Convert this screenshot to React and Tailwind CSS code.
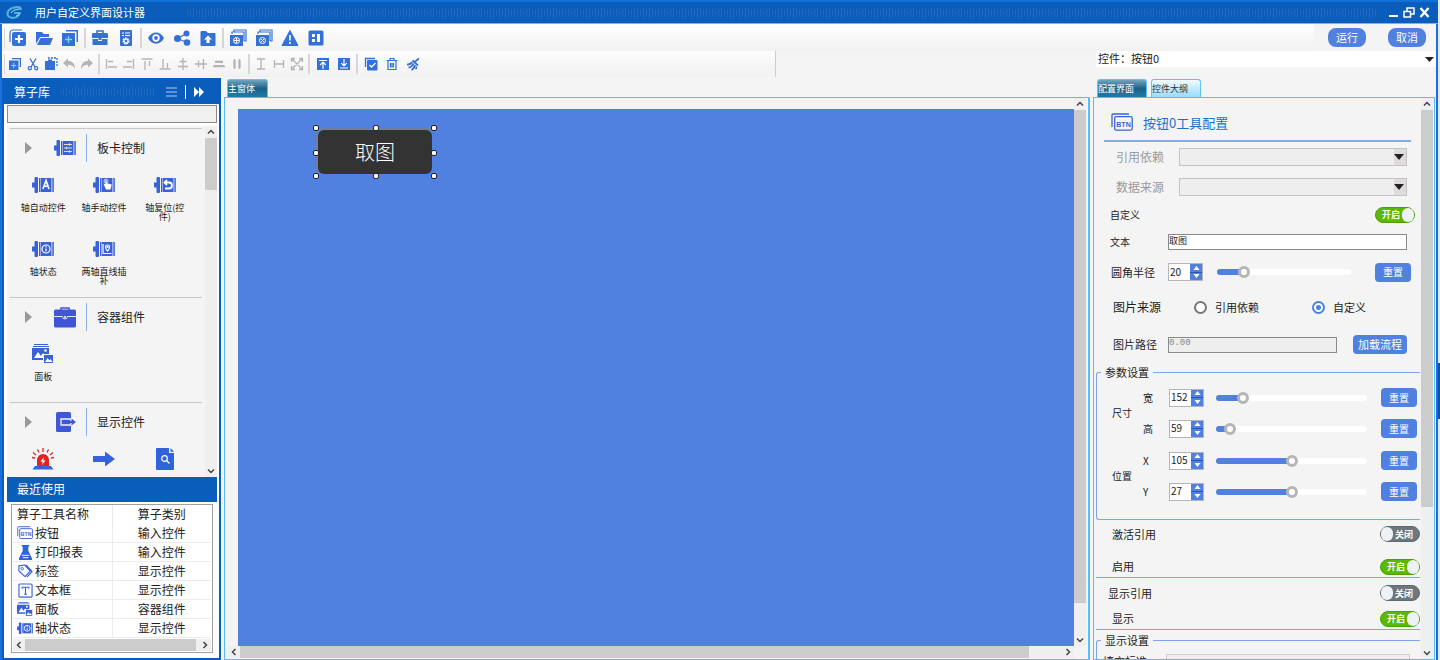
import { useState } from "react";

const B = "#3570d6";
const G = "#b4b4b4";

function Svg({ size = 18, box = 18, color = B, children }) {
  return (
    <svg width={size} height={size} viewBox={`0 0 ${box} ${box}`} fill={color} stroke="none" className="shrink-0" aria-hidden="true">
      {children}
    </svg>
  );
}

// barra superior
const topTools = [
  [
    { name: "新建", icon: <><path d="M1 13V4a3 3 0 0 1 3-3h9" fill="none" stroke={B} strokeWidth="1.2" /><rect x="3" y="3" width="14" height="14" rx="2" /><path d="M10 6v8M6 10h8" stroke="#fff" strokeWidth="2.2" /></> },
    { name: "打开", icon: <><path d="M1 3h6l1.500 2H14v3H5L1 15z" /><path d="M5.500 9H18l-3 7H2z" /></> },
    { name: "添加窗口", icon: <><path d="M5 1h12v12h-1.500V2.500H5z" /><rect x="1" y="4" width="13" height="13" /><path d="M7.500 7v7M4 10.500h7" stroke="#8fd0ee" strokeWidth="1.300" /></> },
  ],
  [
    { name: "工具箱", icon: <><path d="M6 4V2h6v2" fill="none" stroke={B} strokeWidth="1.600" /><path d="M2 4h14a1 1 0 0 1 1 1v4H1V5a1 1 0 0 1 1-1zM1.500 10H7v2h4v-2h5.500v6h-15z" /><path d="M1 9.500h16" stroke="#fff" strokeWidth=".8" /><rect x="7.500" y="8.500" width="3" height="2.500" /></> },
    { name: "文档设置", icon: <><rect x="3" y="1" width="12" height="16" rx="1" /><path d="M5 4h2M8 4h5M5 6.500h2M8 6.500h5" stroke="#fff" strokeWidth="1" /><circle cx="9" cy="12" r="2.600" fill="none" stroke="#fff" strokeWidth="1.800" strokeDasharray="1.600 .6" /><circle cx="9" cy="12" r="1.900" fill="none" stroke="#fff" strokeWidth="1" /></> },
  ],
  [
    { name: "预览", icon: <><path d="M1 9c3.500-7.500 12.500-7.500 16 0-3.500 7.500-12.500 7.500-16 0z" /><circle cx="9" cy="9" r="3.700" fill="#fff" /><circle cx="9" cy="9" r="1.900" /></> },
    { name: "分享", icon: <><circle cx="4.500" cy="9.500" r="3.500" /><circle cx="13.500" cy="4.500" r="3" /><circle cx="14" cy="13.500" r="3.300" /><path d="M4.500 9.500l9-5M4.500 9.500l9.500 4" stroke={B} strokeWidth="1.200" /></> },
    { name: "导出", icon: <><path d="M2 2h5l2 2h6.500a1 1 0 0 1 1 1v11a1 1 0 0 1-1 1h-13a1 1 0 0 1-1-1V3z" /><path d="M9 6.500l4 4h-2.500V14h-3v-3.500H5z" fill="#fff" /></> },
  ],
  [
    { name: "新增模板", icon: <><path d="M5 3V1h12v11h-2M3 5V3h12v9" fill="none" stroke={B} strokeWidth="1.200" /><path d="M1 6h13v11H1z" /><circle cx="7.500" cy="11.500" r="3" fill="none" stroke="#fff" /><path d="M7.500 9v5M5 11.500h5" stroke="#fff" /></> },
    { name: "删除模板", icon: <><path d="M5 3V1h12v11h-2M3 5V3h12v9" fill="none" stroke={B} strokeWidth="1.200" /><path d="M1 6h13v11H1z" /><circle cx="7.500" cy="11.500" r="3" fill="none" stroke="#fff" /><path d="M5.800 9.800l3.400 3.400M9.200 9.800l-3.400 3.400" stroke="#fff" /></> },
    { name: "警告", icon: <><path d="M9 1.500L17 16.500H1z" stroke={B} strokeLinejoin="round" /><path d="M9 6v5.500M9 13v2" stroke="#fff" strokeWidth="1.600" /></> },
    { name: "布局", icon: <><rect x="1.500" y="1.500" width="15" height="15" rx="1.500" /><path d="M5 5h3v3H5zM5 10h3v3H5zM10 5h3v8h-3z" fill="#fff" /></> },
  ],
];

const ln = (d) => <path d={d} fill="none" stroke={G} strokeWidth="1.300" />;
const editTools = [
  [
    { name: "复制", icon: <><path d="M4 1h9v9h-1.300V2.300H4z" /><rect x="1" y="3.500" width="9.500" height="9.500" /><path d="M5.700 6v5M3.200 8.500h5" stroke="#8fd0ee" /></> },
    { name: "剪切", icon: <path d="M4 1.500l5 8.500M10 1.500L5 10" fill="none" stroke={B} strokeWidth="1.300" />, extra: true },
    { name: "粘贴", icon: <><path d="M4 1h9v9" fill="none" stroke={B} strokeDasharray="2 1" strokeWidth="1.300" /><path d="M1 4h10v9H1zM4 2.500h4V4H4z" /></> },
    { name: "撤销", icon: <path d="M1 6l5-4.500V4c4 0 7 2.500 7 8-1.500-3-3.500-4.200-7-4.200v2.700z" fill={G} /> },
    { name: "重做", icon: <path d="M13 6L8 1.500V4c-4 0-7 2.500-7 8 1.500-3 3.500-4.200 7-4.200v2.700z" fill={G} /> },
  ],
  [
    { name: "左对齐", icon: <>{ln("M2.500 2v10M4 4.500h5M4 10h9")}</> },
    { name: "右对齐", icon: <>{ln("M11.500 2v10M5 4.500h5M1 10h9")}</> },
    { name: "顶对齐", icon: <>{ln("M1.500 2h11M5 4v9M9.500 4v5")}</> },
    { name: "底对齐", icon: <>{ln("M1.500 12h11M5 2v9M9.500 6v5")}</> },
    { name: "水平居中", icon: <>{ln("M7 1v12M3.500 4.500h7M2 9.500h10")}</> },
    { name: "垂直居中", icon: <>{ln("M1 7h12M4.500 3.500v7M9.500 2v10")}</> },
    { name: "等宽", icon: <>{ln("M3 4.500h8M1 9.500h12M3 5.300h8M2 8.700h10")}</> },
    { name: "等高", icon: <>{ln("M4.500 2v10M9.500 2v10M4 4h1v6H4zM9 4h1v6H9z")}</> },
  ],
  [
    { name: "垂直间距", icon: <>{ln("M3 2h8M7 2v10M3 12h8")}</> },
    { name: "水平间距", icon: <>{ln("M2.500 3v8M2.500 7h9M11.500 3v8")}</> },
    { name: "缩放", icon: <>{ln("M2 2l10 10M12 2L2 12M1.500 5V1.500H5M9 1.500h3.500V5M12.500 9v3.500H9M5 12.500H1.500V9")}</> },
  ],
];
const layerTools = [
  [
    { name: "置顶", icon: <><rect x="1" y="1" width="12" height="12" /><path d="M3 3.500h8M7 12V5.500M4.200 8L7 5.200 9.800 8" fill="none" stroke="#fff" strokeWidth="1.200" /></> },
    { name: "置底", icon: <><rect x="1" y="1" width="12" height="12" /><path d="M3 11h8M7 2v7M4.200 6.200L7 9l2.800-2.800" fill="none" stroke="#fff" strokeWidth="1.200" /></> },
  ],
  [
    { name: "全选", icon: <><path d="M1.500 10V1.500H11" fill="none" stroke={B} strokeWidth="1.300" /><rect x="3" y="3" width="10.500" height="10.500" rx="1" /><path d="M5.500 8l2 2 4-4" fill="none" stroke="#fff" strokeWidth="1.300" /></> },
    { name: "删除", icon: <path d="M1.500 3.500h11M5 3V1.500h4V3M3 4v8.500h8V4M5.500 6v4.500M8.500 6v4.500M7 6v4.500" fill="none" stroke={B} strokeWidth="1.200" /> },
    { name: "清空", icon: <path d="M13 1.500L8.500 5M6.500 3.500l5.500 5M6 5C5 7 3 7.500 1 7.700M7.500 6.500C6.500 9 5 10 2.500 10.700M9 8c-.5 2.500-1.500 4-3.500 5M10.500 9.500L10 12" fill="none" stroke={B} strokeWidth="1.800" /> },
  ],
];

function ToolGroup({ items, wide }) {
  return (
    <div className="flex items-center">
      {items.map((t) => (
        <button key={t.name} type="button" aria-label={t.name} className={wide ? "flex w-[21px] justify-center" : "flex w-[18px] justify-center"}>
          <Svg size={14} box={14}>
            {t.icon}
            {t.extra && (
              <g fill="none" stroke={B} strokeWidth="1.200">
                <circle cx="3.800" cy="11.300" r="1.600" />
                <circle cx="10.200" cy="11.300" r="1.600" />
              </g>
            )}
          </Svg>
        </button>
      ))}
    </div>
  );
}

const Sep = () => <span className="mx-0.5 h-5 w-0.5 bg-[#d6d6d6]" />;

// onda decorativa de las cabeceras
function Wave({ id }) {
  const hs = [4, 6, 10, 5, 8, 12, 9, 6, 11, 7, 12, 10, 6, 9, 5, 8];
  return (
    <svg className="h-4 w-full" aria-hidden="true">
      <defs>
        <pattern id={id} width="48" height="16" patternUnits="userSpaceOnUse">
          {hs.map((h, i) => (
            <rect key={i} x={i * 3} y={8 - h / 2} width="1" height={h} fill="#1f69bf" />
          ))}
        </pattern>
      </defs>
      <rect width="100%" height="16" fill={`url(#${id})`} />
    </svg>
  );
}

const chevrons = {
  up: "M1 5.500L4 2.500l3 3",
  down: "M1 2.500l3 3 3-3",
  left: "M5.500 1l-3 3 3 3",
  right: "M2.500 1l3 3-3 3",
};

function Arrow({ dir }) {
  return (
    <button type="button" aria-label={dir} className="flex size-3 shrink-0 items-center justify-center">
      <svg width="8" height="8" viewBox="0 0 8 8" fill="none" stroke="#444" strokeWidth="1.500">
        <path d={chevrons[dir]} />
      </svg>
    </button>
  );
}

function VScroll({ size }) {
  return (
    <div className="flex w-3 shrink-0 flex-col bg-[#efefef]">
      <Arrow dir="up" />
      <div className="flex-1">
        <div className="bg-[#cccccc]" style={{ height: size }} />
      </div>
      <Arrow dir="down" />
    </div>
  );
}

function HScroll({ size }) {
  return (
    <div className="flex h-3 min-w-0 flex-1 bg-[#efefef]">
      <Arrow dir="left" />
      <div className="flex-1">
        <div className="h-full bg-[#cccccc]" style={{ width: size }} />
      </div>
      <Arrow dir="right" />
    </div>
  );
}

// iconos de la biblioteca
function AxisIcon({ children, size = 22 }) {
  return (
    <svg width={size} height={(size * 20) / 22} viewBox="0 0 22 20" fill="#3a62d8" aria-hidden="true" className="shrink-0">
      <rect x="0" y="7.500" width="3" height="5" />
      <rect x="2.500" y="2" width="3.500" height="16" rx="1" />
      <rect x="7" y="3" width="1" height="14" />
      <rect x="8.500" y="3" width="11" height="14" />
      <rect x="20.300" y="3" width="1.500" height="14" />
      <g stroke="#fff" fill="none" strokeWidth="1.200" transform="translate(1 0)">{children}</g>
    </svg>
  );
}

function PanelIcon({ size = 22 }) {
  return (
    <svg width={size} height={(size * 20) / 22} viewBox="0 0 22 20" fill="#3a62d8" aria-hidden="true" className="shrink-0">
      <path d="M2 0h14v1H2zM1 2h16v1H1zM0 4h17v12H0z" />
      <path d="M2 14l4-6 3 4 2-3 3 5z" fill="#fff" />
      <circle cx="13.500" cy="6.500" r="1.300" fill="#fff" />
      <rect x="11.500" y="10.500" width="10" height="9" stroke="#f4f4f4" />
      <path d="M13 18l2.500-4 2 2.500 1-1.500 2 3z" fill="#fff" />
    </svg>
  );
}

function BtnIcon({ size = 22 }) {
  return (
    <svg width={size} height={(size * 18) / 22} viewBox="0 0 22 18" fill="none" stroke="#3a62d8" aria-hidden="true" className="shrink-0">
      <path d="M1 14V2a1 1 0 0 1 1-1h16" strokeWidth="1.300" />
      <rect x="3.700" y="3.700" width="17.500" height="13.500" rx="1.500" strokeWidth="1.300" />
      <text x="12.500" y="13.500" fontSize="7" fontWeight="700" fontFamily="Liberation Sans, sans-serif" textAnchor="middle" fill="#3a62d8" stroke="none">BTN</text>
    </svg>
  );
}

const InfoGlyph = <><circle cx="13" cy="10" r="4" /><path d="M13 9.500v3M13 7.300v1.200" /></>;

const library = [
  {
    title: "板卡控制",
    icon: <AxisIcon><path d="M9 6.500h8M9 10h8M9 13.500h8M14.500 5.300v2.400M11.500 8.800v2.400M14.500 12.300v2.400" stroke="#e8dcc0" /></AxisIcon>,
    items: [
      { label: "轴自动控件", icon: <AxisIcon><path d="M10 14l3-8.500 3 8.500M11 11.300h4" strokeWidth="1.600" /></AxisIcon> },
      { label: "轴手动控件", icon: <AxisIcon><path d="M12 5v5l-1.500-.5 2 4.500h3.500l1-4-5-1.500V5z" fill="#fff" /><circle cx="12" cy="6" r="2" strokeWidth=".7" /></AxisIcon> },
      { label: "轴复位(控件)", icon: <AxisIcon><path d="M12 5L9.500 7.500 12 10M10 7.500h4a3 3 0 0 1 0 6h-4" strokeWidth="1.800" /></AxisIcon> },
      { label: "轴状态", icon: <AxisIcon>{InfoGlyph}</AxisIcon> },
      { label: "两轴直线插补", icon: <AxisIcon><path d="M9 5v9.500h8.500" /><path d="M13.500 12c-3-3-2.500-6 0-6s3 3 0 6z" /><circle cx="13.500" cy="8" r=".5" /></AxisIcon> },
    ],
  },
  {
    title: "容器组件",
    icon: (
      <svg width="22" height="22" viewBox="0 0 22 22" fill="#3f56d6" aria-hidden="true">
        <path d="M7 4V2h8v2" fill="none" stroke="#3f56d6" strokeWidth="1.500" />
        <rect x="0" y="3.500" width="22" height="18" rx="1.500" />
        <path d="M0 10.500h8.500a2.500 2.500 0 0 0 5 0H22" fill="none" stroke="#e8e8e8" />
        <circle cx="11" cy="11" r="1" fill="#fff" />
      </svg>
    ),
    items: [{ label: "面板", icon: <PanelIcon /> }],
  },
  {
    title: "显示控件",
    icon: (
      <svg width="22" height="22" viewBox="0 0 22 22" fill="#3f56d6" aria-hidden="true">
        <rect x="2" y="1" width="15" height="20" rx="1.500" />
        <path d="M7 8h10v6H7z" fill="none" stroke="#f4f4f4" strokeWidth="1.300" />
        <path d="M17 8h2v6h-2z" fill="#f4f4f4" />
        <path d="M9 10h8.500V7.500L22 11l-4.500 3.500V12H9z" />
      </svg>
    ),
    items: [
      {
        label: "",
        icon: (
          <svg width="22" height="22" viewBox="0 0 22 22" fill="#e32222" aria-label="报警灯">
            <path d="M5 18v-6a6 6 0 0 1 12 0v6z" />
            <path d="M11 0v4M5.500 1.500l1.500 3M16.500 1.500l-1.500 3M1 4.500l3 2.500M21 4.500L18 7M0 9.500l3 .5M22 9.500l-3 .5" stroke="#e32222" strokeWidth="1.300" />
            <path d="M12 9l-3.500 4.500h2.200L10 17l3.500-4.500h-2.200z" fill="#fff" />
            <path d="M3 18h16l2.500 3.500H.5z" fill="#3a62d8" />
          </svg>
        ),
      },
      {
        label: "",
        icon: (
          <svg width="22" height="22" viewBox="0 0 22 22" fill="#3a62d8" aria-label="箭头">
            <path d="M0 8h12V3.500L22 11l-10 7.500V14H0z" />
          </svg>
        ),
      },
      {
        label: "",
        icon: (
          <svg width="22" height="22" viewBox="0 0 22 22" fill="#2f63dc" aria-label="查看文件">
            <path d="M3 0h12v5h5v16a1 1 0 0 1-1 1H3a1 1 0 0 1-1-1V1a1 1 0 0 1 1-1zM16.500 0L20 3.800h-3.500z" />
            <circle cx="10.500" cy="10.500" r="2.800" fill="none" stroke="#fff" strokeWidth="1.200" />
            <path d="M12.500 12.500l3 3" stroke="#fff" strokeWidth="1.300" />
          </svg>
        ),
      },
    ],
  },
];

const recent = [
  { name: "按钮", kind: "输入控件", icon: <BtnIcon size={16} /> },
  { name: "打印报表", kind: "输入控件", icon: <Svg size={15} box={16} color="#2f63dc"><path d="M4 0h8v1.500h-1V6l4 8.500V16H1v-1.500L5 6V1.500H4z" /><path d="M4 11h8M5 13.500h6" stroke="#fff" /></Svg> },
  { name: "标签", kind: "显示控件", icon: <Svg size={15} box={16} color="none"><path d="M1 2l6-1 6 6.500-5.500 6L1 7.500zM8.500 1L15 8l-5.500 6" stroke="#3a62d8" strokeLinejoin="round" strokeWidth="1.200" /><circle cx="4.500" cy="5" r="1.300" stroke="#3a62d8" /></Svg> },
  { name: "文本框", kind: "显示控件", icon: <Svg size={15} box={16} color="none"><rect x="1" y="1" width="14" height="14" rx="1" stroke="#3a62d8" strokeWidth="1.200" /><path d="M4.500 6V4.500h7V6M8 4.500v7.500M6.500 12h3" stroke="#3a62d8" strokeWidth="1.200" /></Svg> },
  { name: "面板", kind: "容器组件", icon: <PanelIcon size={16} /> },
  { name: "轴状态", kind: "显示控件", icon: <AxisIcon size={16}>{InfoGlyph}</AxisIcon> },
];

function Sidebar() {
  return (
    <aside className="flex w-[219px] shrink-0 flex-col border-2 border-[#0a5dbb] bg-white">
      <div className="flex h-6 shrink-0 items-center bg-[#0a5dbb] pl-2.5 text-[12px] text-white">
        <h2 className="shrink-0">算子库</h2>
        <div className="ml-2.5 w-24">
          <Wave id="waveLib" />
        </div>
        <button type="button" aria-label="列表" className="ml-2.5">
          <svg width="11" height="10" viewBox="0 0 11 10" stroke="#a9cbef" strokeWidth="1.200"><path d="M0 1h11M0 5h11M0 9h11" /></svg>
        </button>
        <span className="ml-2 h-3.5 w-px bg-white" />
        <button type="button" aria-label="展开" className="ml-2">
          <svg width="10" height="10" viewBox="0 0 10 10" fill="#fff"><path d="M0 0l5 5-5 5zM5 0l5 5-5 5z" /></svg>
        </button>
      </div>
      <div className="flex min-h-0 flex-1 flex-col pl-[3px] pr-0.5">
        <input aria-label="搜索算子" className="my-px h-[18px] w-full shrink-0 border border-[#8a8a8a] bg-[#f0f0f0] px-1 text-[11px]" />
        <div className="mt-0.5 flex min-h-0 flex-1 bg-[#f4f4f4]">
          <div className="mt-0.5 min-w-0 flex-1 overflow-hidden px-[3px]">
            {library.map((g) => (
              <section key={g.title} className="border-t border-[#c8c8c8]">
                <div className="flex h-[38px] items-center">
                  <button type="button" aria-label="展开分组" className="ml-[15px]">
                    <svg width="7" height="12" viewBox="0 0 7 12" fill="#999"><path d="M0 0l7 6-7 6z" /></svg>
                  </button>
                  <span className="ml-[22px] flex w-[22px] justify-center">{g.icon}</span>
                  <span className="ml-2.5 h-7 w-px bg-[#8fb0ee]" />
                  <h3 className="ml-2.5 text-[12px]">{g.title}</h3>
                </div>
                <div className="grid grid-cols-3 gap-y-[18px] pb-3 pl-[3px] pr-[7px] pt-2">
                  {g.items.map((it, i) => (
                    <div key={i} className="flex h-[46px] flex-col items-center gap-2">
                      <span className="flex h-5 shrink-0 items-center">{it.icon}</span>
                      <span className="w-12 text-center text-[9px] leading-[9px]">{it.label}</span>
                    </div>
                  ))}
                </div>
              </section>
            ))}
          </div>
          <VScroll size={52} />
        </div>
        <div className="shrink-0 pb-[5px]">
          <h2 className="flex h-[25px] items-center bg-[#0a5dbb] pl-2.5 text-[12px] text-white">最近使用</h2>
          <div className="mx-1 mt-0.5 border border-[#a0a0a0] px-px">
            <table className="w-full table-fixed text-left text-[12px]">
              <thead>
                <tr className="h-[19px]">
                  <th className="border-r border-[#e8e8e8] pl-1 font-normal">算子工具名称</th>
                  <th className="text-center font-normal">算子类别</th>
                </tr>
              </thead>
              <tbody>
                {recent.map((r) => (
                  <tr key={r.name} className="h-[19px] border-b border-[#ececec]">
                    <td className="border-r border-[#ececec] pl-1">
                      <span className="flex items-center gap-0.5">
                        <span className="flex w-4 justify-center">{r.icon}</span>
                        {r.name}
                      </span>
                    </td>
                    <td className="text-center">{r.kind}</td>
                  </tr>
                ))}
              </tbody>
            </table>
            <div className="flex py-px">
              <HScroll size="98%" />
            </div>
          </div>
        </div>
      </div>
    </aside>
  );
}

function Tab({ active, children }) {
  return (
    <button
      type="button"
      role="tab"
      aria-selected={!!active}
      className={
        active
          ? "h-[18px] rounded-t-[3px] border border-b-0 border-[#5cc4f5] bg-linear-to-b from-[#6fa6bd] via-[#1a6288] to-[#1f7ca6] pr-3 text-[9px] text-white"
          : "h-[18px] rounded-t-[3px] border border-b-0 border-[#5cc4f5] bg-linear-to-b from-[#f2fbff] via-[#c3ebfd] to-[#9adcfb] pr-3 text-[9px] text-[#333]"
      }
    >
      {children}
    </button>
  );
}

function Widget() {
  const dots = [
    "-left-1 -top-1", "left-1/2 -top-1 -ml-0.5", "-right-1 -top-1",
    "-left-1 top-1/2 -mt-0.5", "-right-1 top-1/2 -mt-0.5",
    "-left-1 -bottom-1", "left-1/2 -bottom-1 -ml-0.5", "-right-1 -bottom-1",
  ];
  return (
    <div className="absolute left-[78px] top-[19px] h-12 w-[118px] border border-[#6d7fa8] p-px">
      <button type="button" className="size-full rounded-md bg-[#333] text-[20px] font-light text-white">取图</button>
      {dots.map((d) => (
        <span key={d} className={`absolute size-[6px] rounded-[2px] border border-[#222] bg-white ${d}`} />
      ))}
    </div>
  );
}

function Workspace() {
  return (
    <main className="ml-[3px] flex min-w-0 flex-1 flex-col pt-px">
      <div role="tablist" className="flex pl-[3px]">
        <Tab active>主窗体</Tab>
      </div>
      <div className="flex min-h-0 flex-1 flex-col border border-r-2 border-[#55bdf8] pb-px pl-px pr-0.5">
        <div className="flex min-h-0 flex-1">
          <div className="relative ml-3 mt-[11px] min-w-0 flex-1 bg-[#5080e0]">
            <Widget />
          </div>
          <VScroll size="94%" />
        </div>
        <div className="flex pl-0.5 pr-3">
          <HScroll size="96%" />
        </div>
      </div>
    </main>
  );
}

function Select({ label, options = [], id }) {
  return (
    <div className="flex h-[30px] items-center pr-[13px] text-[#9a9a9a]">
      <label htmlFor={id} className="w-[83px] pl-5 text-[12px]">{label}</label>
      <div className="relative flex-1">
        <select id={id} disabled className="block h-[18px] w-full appearance-none border border-[#c4c4c4] bg-[#eee]">
          {options.map((o) => <option key={o}>{o}</option>)}
        </select>
        <span className="pointer-events-none absolute inset-y-px right-px flex w-3 items-center bg-[#e0dcdc]">
          <svg width="10" height="6" viewBox="0 0 10 6" fill="#222"><path d="M0 0h10L5 6z" /></svg>
        </span>
      </div>
    </div>
  );
}

function Toggle({ label, on }) {
  const [v, setV] = useState(on);
  return (
    <label className={v ? "relative flex h-4 w-10 items-center rounded-full border border-[#4aa005] bg-[#5cb800] pl-1.5 text-[9px] font-bold text-white" : "relative flex h-4 w-10 items-center justify-end rounded-full border border-[#5d6b72] bg-[#6b797f] pr-1.5 text-[9px] font-bold text-white"}>
      <input type="checkbox" role="switch" aria-label={label} checked={v} onChange={(e) => setV(e.target.checked)} className="absolute inset-0 opacity-0" />
      <span>{v ? "开启" : "关闭"}</span>
      <span className={v ? "absolute right-0 h-3.5 w-3 rounded-full bg-[#eef2f5]" : "absolute left-0 h-3.5 w-3 rounded-full bg-[#eef2f5]"} />
    </label>
  );
}

function Reset() {
  return <button type="button" className="h-[19px] w-9 rounded bg-[#5080e0] text-[10px] text-white">重置</button>;
}

function NumberSlider({ label, init, max }) {
  const [v, setV] = useState(init);
  const pct = (v / max) * 100;
  return (
    <>
      <div className="flex h-[18px] w-[35px] border border-[#b5b5b5] bg-white">
        <input type="text" inputMode="numeric" aria-label={label} value={v} onChange={(e) => setV(Number(e.target.value) || 0)} className="w-[21px] bg-white pb-0.5 pl-px text-[10px]" />
        <div className="flex flex-1 flex-col gap-px bg-[#2d55b0]">
          <button type="button" aria-label="增加" onClick={() => setV(v + 1)} className="flex flex-1 items-center justify-center bg-[#5080e0]">
            <svg width="7" height="4" viewBox="0 0 6 4" fill="#fff"><path d="M0 4h6L3 0z" /></svg>
          </button>
          <button type="button" aria-label="减少" onClick={() => setV(v - 1)} className="flex flex-1 items-center justify-center bg-[#5080e0]">
            <svg width="7" height="4" viewBox="0 0 6 4" fill="#fff"><path d="M0 0h6L3 4z" /></svg>
          </button>
        </div>
      </div>
      <input
        type="range"
        aria-label={label}
        min="0"
        max={max}
        value={v}
        onChange={(e) => setV(Number(e.target.value))}
        style={{ backgroundImage: `linear-gradient(to right, #5080e0 ${pct}%, #fff ${pct}%)` }}
        className="h-1.5 min-w-0 flex-1 appearance-none rounded-full [&::-webkit-slider-thumb]:size-3 [&::-webkit-slider-thumb]:appearance-none [&::-webkit-slider-thumb]:rounded-full [&::-webkit-slider-thumb]:border-3 [&::-webkit-slider-thumb]:border-[#b5b5b5] [&::-webkit-slider-thumb]:bg-white"
      />
    </>
  );
}

function ParamPair({ title, rows }) {
  return (
    <div className="flex items-center">
      <span className="w-[38px] pl-[15px] text-[10px] whitespace-nowrap">{title}</span>
      <div className="flex-1">
        {rows.map((r) => (
          <div key={r.label} className="flex h-[31px] items-center pr-[3px]">
            <span className="w-[34px] pl-2 text-[10px]">{r.label}</span>
            <div className="flex flex-1 items-center gap-3 pr-3.5">
              <NumberSlider {...r} />
            </div>
            <Reset />
          </div>
        ))}
      </div>
    </div>
  );
}

function Properties() {
  const [src, setSrc] = useState("custom");
  const [text, setText] = useState("取图");
  const radio = "size-[13px] appearance-none rounded-full border-2 border-[#777] bg-white checked:border-[#4b80e4] checked:bg-[radial-gradient(circle,#4b80e4_2px,white_3px)]";
  return (
    <section className="ml-[3px] mr-px flex w-[342px] shrink-0 flex-col pt-px">
      <div role="tablist" className="flex gap-1 pl-1">
        <Tab active>配置界面</Tab>
        <Tab>控件大纲</Tab>
      </div>
      <div className="flex min-h-0 flex-1 border border-[#55bdf8] pl-0.5 pr-px">
        <div className="mr-px min-w-0 flex-1 overflow-hidden">
          <div className="ml-2 mr-[9px] flex h-11 items-center gap-2.5 border-b-2 border-[#86a9ef] pl-[7px] pt-1.5">
            <BtnIcon />
            <h2 className="text-[13px] text-[#1e70cf]">按钮0工具配置</h2>
          </div>
          <Select id="ref" label="引用依赖" />
          <Select id="src" label="数据来源" />
          <div className="flex h-[25px] items-center justify-between pl-3.5 pr-[5px] text-[10px]">
            <span>自定义</span>
            <Toggle label="自定义" on />
          </div>
          <div className="flex h-[30px] items-center pr-[13px]">
            <label htmlFor="texto" className="w-[72px] pl-3.5 text-[10px]">文本</label>
            <input id="texto" value={text} onChange={(e) => setText(e.target.value)} className="h-4 min-w-0 flex-1 border border-[#8a8a8a] bg-white pb-1 text-[9px] leading-none" />
          </div>
          <div className="flex h-[30px] items-center pr-[9px]">
            <span className="w-[72px] pl-[15px] text-[11px]">圆角半径</span>
            <div className="flex flex-1 items-center gap-3.5 pr-6">
              <NumberSlider label="圆角半径" init={20} max={116} />
            </div>
            <Reset />
          </div>
          <div className="flex h-10 items-center text-[11px]">
            <span className="w-[98px] pl-[17px] text-[12px]">图片来源</span>
            <label className="flex flex-1 items-center gap-2">
              <input type="radio" name="imgsrc" checked={src === "ref"} onChange={() => setSrc("ref")} className={radio} />
              引用依赖
            </label>
            <label className="flex w-[108px] items-center gap-2">
              <input type="radio" name="imgsrc" checked={src === "custom"} onChange={() => setSrc("custom")} className={radio} />
              自定义
            </label>
          </div>
          <div className="flex h-[35px] items-center pr-[13px]">
            <label htmlFor="ruta" className="w-[72px] pl-[17px] text-[11px]">图片路径</label>
            <input id="ruta" disabled defaultValue="0.00" className="h-4 min-w-0 flex-1 border border-[#8a8a8a] bg-[#eee] pb-1 font-['Liberation_Mono',monospace] text-[9px] leading-none text-[#888]" />
            <button type="button" className="ml-4 h-[19px] w-[54px] rounded bg-[#5080e0] text-[11px] text-white">加载流程</button>
          </div>
          <fieldset className="mt-0.5 rounded-l-[3px] border border-r-0 border-[#7ba3ee] pb-3 pt-0.5">
            <legend className="ml-1 h-4 px-1 text-[11px] leading-4">参数设置</legend>
            <ParamPair title="尺寸" rows={[{ label: "宽", init: 152, max: 1000 }, { label: "高", init: 59, max: 1000 }]} />
            <div className="h-px" />
            <ParamPair title="位置" rows={[{ label: "X", init: 105, max: 210 }, { label: "Y", init: 27, max: 54 }]} />
          </fieldset>
          <div className="flex h-7 items-center justify-between pl-4 text-[11px]">
            <span>激活引用</span>
            <Toggle label="激活引用" on={false} />
          </div>
          <div className="mt-2 flex h-[22px] items-center justify-between border-b border-[#7ba3ee] pl-4 text-[11px]">
            <span>启用</span>
            <Toggle label="启用" on />
          </div>
          <div className="flex h-[30px] items-center justify-between pl-3 text-[11px]">
            <span>显示引用</span>
            <Toggle label="显示引用" on={false} />
          </div>
          <div className="flex h-[22px] items-center justify-between border-b border-[#7ba3ee] pl-4 text-[11px]">
            <span>显示</span>
            <Toggle label="显示" on />
          </div>
          <fieldset className="mt-0.5 rounded-l-[3px] border border-r-0 border-[#7ba3ee] pb-3">
            <legend className="ml-1 h-4 px-1 text-[11px] leading-4">显示设置</legend>
            <div className="mt-1.5 flex items-start pr-2.5">
              <label htmlFor="fondo" className="w-[69px] pl-1.5 pt-0.5 text-[11px]">填充标准</label>
              <select id="fondo" className="h-[18px] flex-1 appearance-none border border-[#d0d0d0] bg-[#eee]" />
            </div>
          </fieldset>
        </div>
        <VScroll size={397} />
      </div>
    </section>
  );
}

export default function App() {
  return (
    <div className="flex h-screen overflow-hidden bg-[#f4f4f4] font-['Noto_Sans_CJK_SC',sans-serif] leading-none text-[#222]">
      <div className="flex min-w-0 flex-1 flex-col border-x-2 border-[#1b6fdd]">
        <header className="-mx-0.5 flex h-6 shrink-0 items-center border-b border-[#7fb0ea] border-t-2 border-t-[#1171d8] bg-[#0a5dbb] pl-1.5 pr-2 text-white">
          <svg width="18" height="14" viewBox="0 0 18 14" fill="none" aria-hidden="true">
            <path d="M15 2C10 0 2 2 1.500 7.500 1.500 13 11 14 13.500 7H8" stroke="#4fb0dc" strokeWidth="2.200" />
            <path d="M5 7c2-3 6-4 11-4M10 10c2 0 3-1 4-3" stroke="#8fd3ea" strokeWidth="1.200" />
          </svg>
          <h1 className="ml-[11px] shrink-0 text-[11px]">用户自定义界面设计器</h1>
          <div className="mx-[42px] mr-3 min-w-0 flex-1">
            <Wave id="waveTop" />
          </div>
          <div className="flex items-center gap-1">
            <button type="button" aria-label="最小化"><svg width="11" height="11" viewBox="0 0 11 11" stroke="#fff" strokeWidth="2"><path d="M1 9h9" /></svg></button>
            <button type="button" aria-label="还原"><svg width="12" height="11" viewBox="0 0 12 11" fill="none" stroke="#fff" strokeWidth="1.500"><path d="M4 4V1h7v6H8M1 4.500h6.500V10H1z" /></svg></button>
            <button type="button" aria-label="关闭"><svg width="11" height="11" viewBox="0 0 11 11" stroke="#fff" strokeWidth="2.400"><path d="M1.500 1l8 9M9.500 1l-8 9" /></svg></button>
          </div>
        </header>

        <div className="flex h-[27px] shrink-0 items-center justify-between">
          <div className="flex h-full flex-1 items-center bg-linear-to-b from-white to-[#f1f1f1]">
            <span className="ml-0.5 h-5 w-px bg-[#d6d6d6]" />
            {topTools.map((g, i) => (
              <div key={i} className="flex items-center">
                {i > 0 && <span className="mx-px h-5 w-0.5 bg-[#d6d6d6]" />}
                {g.map((t) => (
                  <button key={t.name} type="button" aria-label={t.name} className="flex w-[26px] justify-center">
                    <Svg size={18}>{t.icon}</Svg>
                  </button>
                ))}
              </div>
            ))}
          </div>
          <div className="flex gap-[22px] pl-3.5 pr-2.5 text-[11px] text-white">
            <button type="button" className="h-[19px] w-[38px] rounded-lg bg-[#5080e0]">运行</button>
            <button type="button" className="h-[19px] w-[38px] rounded-lg bg-[#5080e0]">取消</button>
          </div>
        </div>

        <div className="flex h-[26px] shrink-0 items-start justify-between">
          <div className="flex h-full w-[54%] items-center border-r border-[#ccc] bg-linear-to-b from-[#fdfdfd] to-[#f1f1f1]">
            <span className="ml-0.5 mr-px h-5 w-px bg-[#d6d6d6]" />
            <ToolGroup items={editTools[0]} />
            <Sep />
            <ToolGroup items={editTools[1]} />
            <Sep />
            <ToolGroup items={editTools[2]} />
            <Sep />
            <ToolGroup items={layerTools[0]} wide />
            <Sep />
            <ToolGroup items={layerTools[1]} wide />
          </div>
          <div className="relative w-[340px]">
            <select aria-label="控件" className="block h-4 w-full appearance-none bg-white pb-0.5 pl-0.5 text-[11px] leading-[14px]">
              <option>控件：按钮0</option>
            </select>
            <svg className="pointer-events-none absolute right-0.5 top-1.5" width="9" height="6" viewBox="0 0 9 6" fill="#222"><path d="M0 0h9L4.500 5z" /></svg>
          </div>
        </div>

        <div className="flex min-h-0 flex-1 pt-px">
          <Sidebar />
          <Workspace />
          <Properties />
        </div>
      </div>
      <div className="flex w-0.5 shrink-0 flex-col bg-[#e6e6e6]">
        <span className="h-[55%]" />
        <span className="h-14 bg-[#0a4fa8]" />
      </div>
    </div>
  );
}
